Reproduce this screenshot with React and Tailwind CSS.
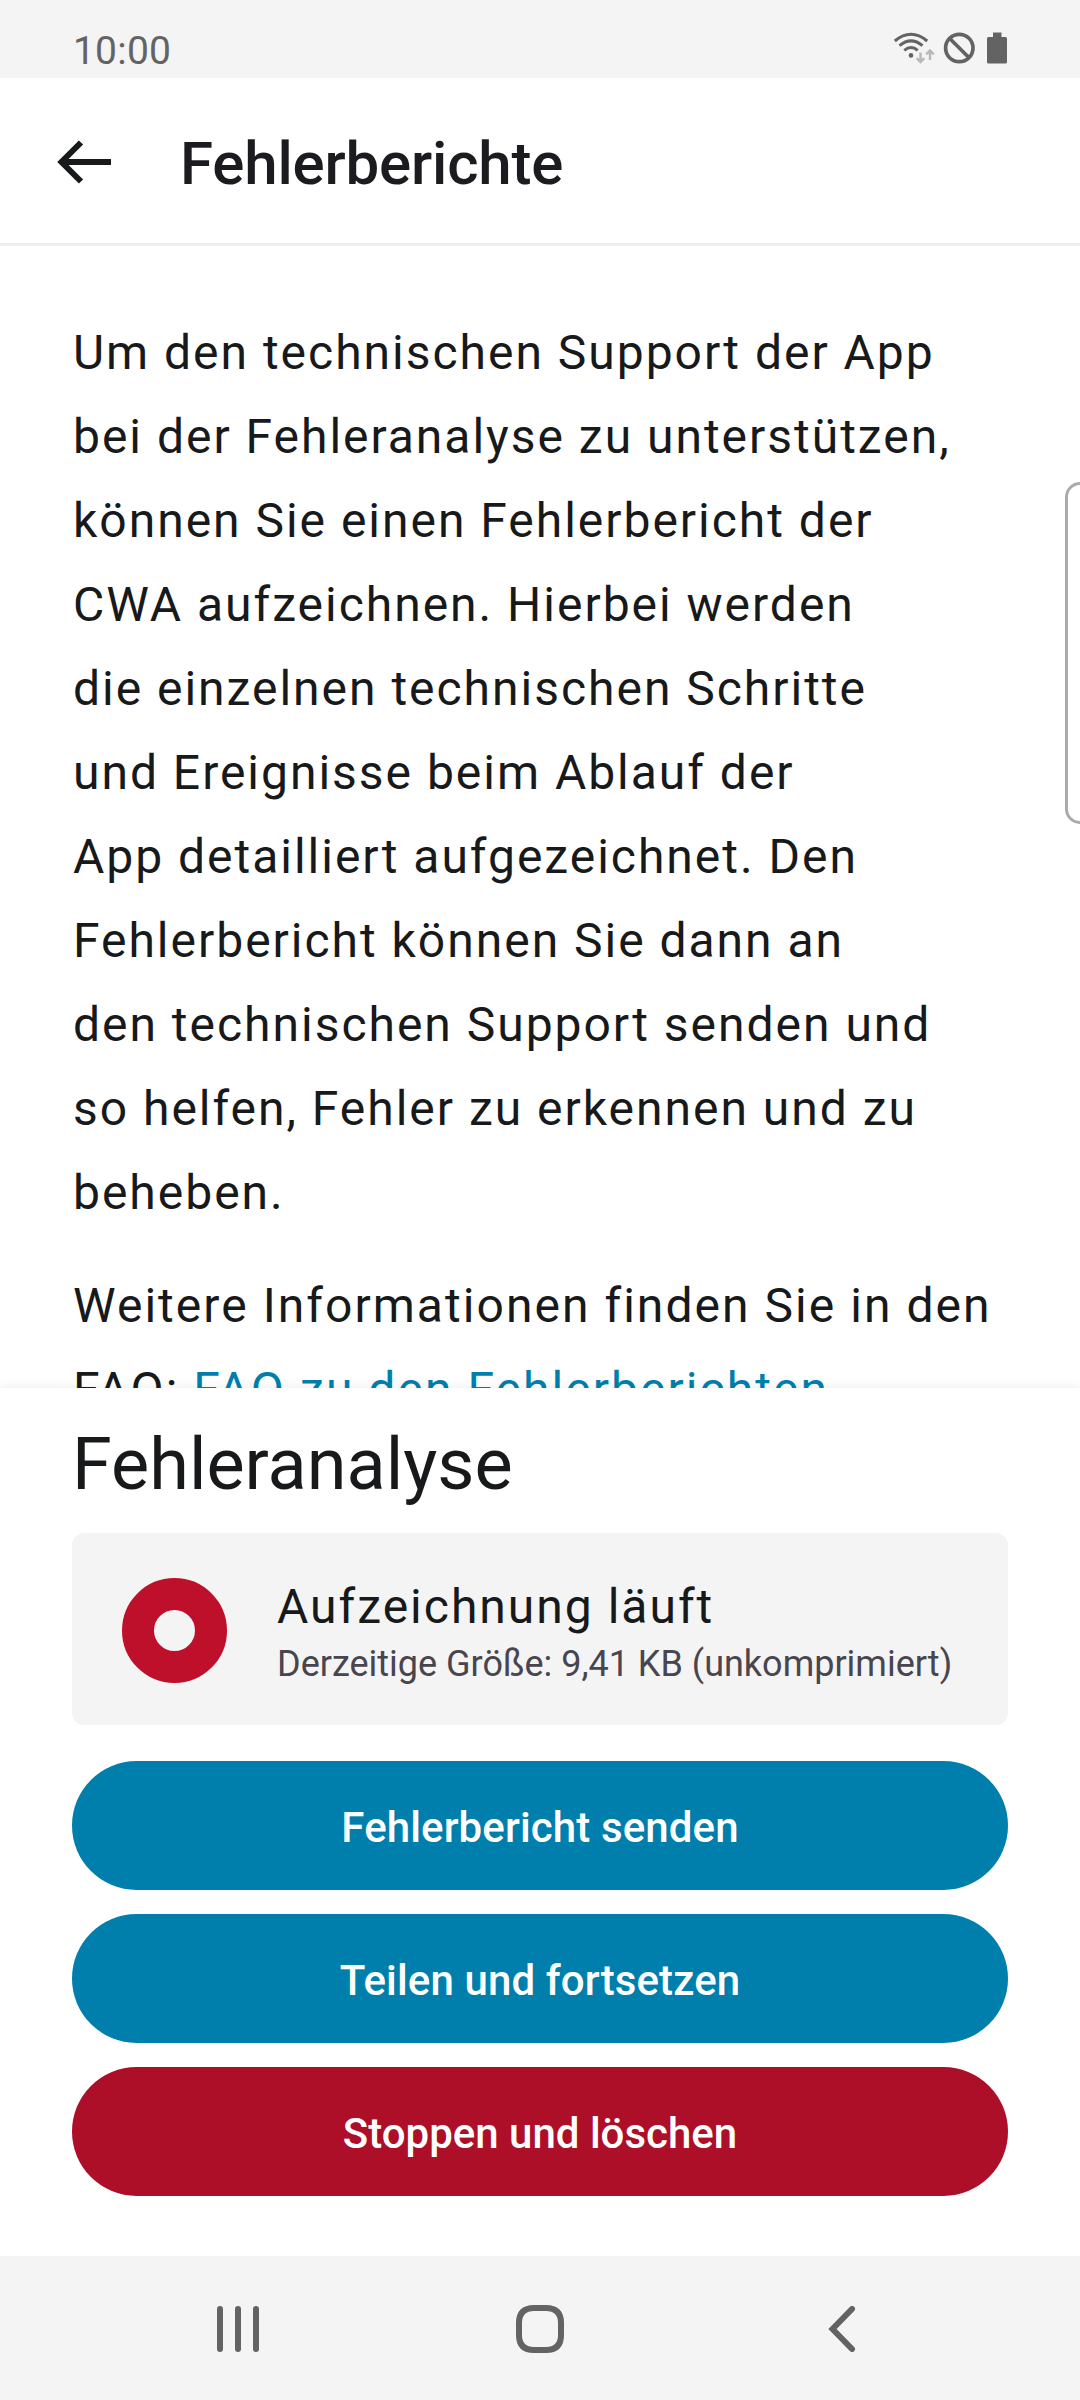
const paragraph = [
  'Um den technischen Support der App',
  'bei der Fehleranalyse zu unterstützen,',
  'können Sie einen Fehlerbericht der',
  'CWA aufzeichnen. Hierbei werden',
  'die einzelnen technischen Schritte',
  'und Ereignisse beim Ablauf der',
  'App detailliert aufgezeichnet. Den',
  'Fehlerbericht können Sie dann an',
  'den technischen Support senden und',
  'so helfen, Fehler zu erkennen und zu',
  'beheben.',
];

function StatusBar() {
  return (
    <div className="flex h-[78px] shrink-0 items-start justify-between bg-[#f4f4f4] pl-[73px] pr-[73px] text-[#636363]">
      <span className="pt-[28px] text-[39px] leading-[46px] tracking-[0.2px]">10:00</span>
      <svg className="mt-[30px]" width="114" height="36" viewBox="893 30 114 36" fill="none">
        <g stroke="#636363" strokeWidth="3" strokeLinecap="butt">
          <path d="M894.8 41Q911 27.500 927.200 41" />
          <path d="M899.500 45.700Q911 36 922.500 45.700" />
          <path d="M904.300 50.400Q911 44.600 917.700 50.400" />
        </g>
        <circle cx="911" cy="55.400" r="2.300" fill="#636363" />
        <g stroke="#b8b8b8" strokeWidth="2.400">
          <path d="M920.500 52.500V61.500M916.700 58.200L920.500 62L924.300 58.200" />
          <path d="M930 60V51M926.200 54.300L930 50.500L933.800 54.300" />
        </g>
        <circle cx="959.300" cy="48" r="13.700" stroke="#636363" strokeWidth="3.700" />
        <path d="M949.500 38.200L969.100 57.800" stroke="#636363" strokeWidth="3.700" />
        <path d="M993 32.500H1001.500V37H1005.500Q1007 37 1007 38.500V62Q1007 63.500 1005.500 63.500H988.500Q987 63.500 987 62V38.500Q987 37 988.500 37H993Z" fill="#636363" />
      </svg>
    </div>
  );
}

function Header() {
  return (
    <header className="flex h-[168px] shrink-0 items-center border-b-3 border-[#eeeeee] pl-[57px]">
      <svg className="mt-[3px]" width="54" height="44" viewBox="0 0 54 44" fill="none" stroke="#17191a" strokeWidth="6">
        <path d="M4 22H54M24 2.500L4.500 22L24 41.500" />
      </svg>
      <h1 className="ml-[69px] mt-[7px] text-[60px] font-medium leading-[70px] tracking-[-0.17px] text-[#1c1b1f]">Fehlerberichte</h1>
    </header>
  );
}

function ActionButton({ children, danger = false }) {
  return (
    <button
      className={`flex h-[129px] w-full items-center justify-center rounded-full pt-[3px] text-[42px] font-medium leading-[49px] text-white ${
        danger ? 'bg-[#ad0f28]' : 'bg-[#007fad] tracking-[0.12px]'
      }`}
    >
      {children}
    </button>
  );
}

function NavigationBar() {
  return (
    <nav className="z-20 flex h-[144px] shrink-0 items-center justify-between bg-[#f4f4f4] pl-[217px] pr-[224px] pt-[2px]">
      <svg width="42" height="46" viewBox="0 0 42 46" stroke="#636363" strokeWidth="6" strokeLinecap="round">
        <path d="M3 3V43M21 3V43M39 3V43" />
      </svg>
      <svg className="-ml-[7px]" width="48" height="48" viewBox="0 0 48 48" fill="none" stroke="#636363" strokeWidth="6">
        <path d="M18 3H30Q45 3 45 18V30Q45 45 30 45H18Q3 45 3 30V18Q3 3 18 3Z" />
      </svg>
      <svg width="28" height="46" viewBox="0 0 28 46" fill="none" stroke="#636363" strokeWidth="6" strokeLinecap="round">
        <path d="M24 3L4.500 23L24 43" strokeLinejoin="miter" />
      </svg>
    </nav>
  );
}

export default function App() {
  return (
    <div className="relative flex h-[2400px] w-[1080px] flex-col overflow-hidden bg-white font-['Roboto',sans-serif] text-[#17191a]">
      <StatusBar />
      <Header />
      <main className="h-[1142px] shrink-0 overflow-hidden pl-[73px] pt-[65px] text-[48px] leading-[84px] tracking-[1.98px]">
        <p className="whitespace-nowrap">
          {paragraph.map((line) => (
            <span key={line} className="block">{line}</span>
          ))}
        </p>
        <p className="mt-[29px] whitespace-nowrap tracking-[2.04px]">
          Weitere Informationen finden Sie in den
          <br />
          FAQ: <a className="text-[#007fad]">FAQ zu den Fehlerberichten</a>
        </p>
      </main>
      <section className="z-10 flex h-[868px] shrink-0 flex-col bg-white px-[72px] pt-[35px] shadow-[0_0_12px_rgba(0,0,0,0.08)]">
        <h2 className="h-[110px] text-[72px] leading-[84px]">Fehleranalyse</h2>
        <div className="flex h-[192px] shrink-0 items-center rounded-[12px] bg-[#f4f4f4] pl-[50px]">
          <div className="mt-[3px] h-[105px] w-[105px] rounded-full border-[32px] border-[#be0f2b]" />
          <div className="ml-[50px] mt-[6px]">
            <div className="text-[48px] leading-[56px] tracking-[2px]">Aufzeichnung läuft</div>
            <div className="mt-[8px] text-[36px] leading-[42px] text-[#49454f]">Derzeitige Größe: 9,41 KB (unkomprimiert)</div>
          </div>
        </div>
        <div className="mt-9 flex flex-col gap-6">
          <ActionButton>Fehlerbericht senden</ActionButton>
          <ActionButton>Teilen und fortsetzen</ActionButton>
          <ActionButton danger>Stoppen und löschen</ActionButton>
        </div>
      </section>
      <NavigationBar />
      <div className="absolute left-[1065px] top-[482px] h-[342px] w-[40px] rounded-l-[15px] border-3 border-[#ababab] bg-white" />
    </div>
  );
}
